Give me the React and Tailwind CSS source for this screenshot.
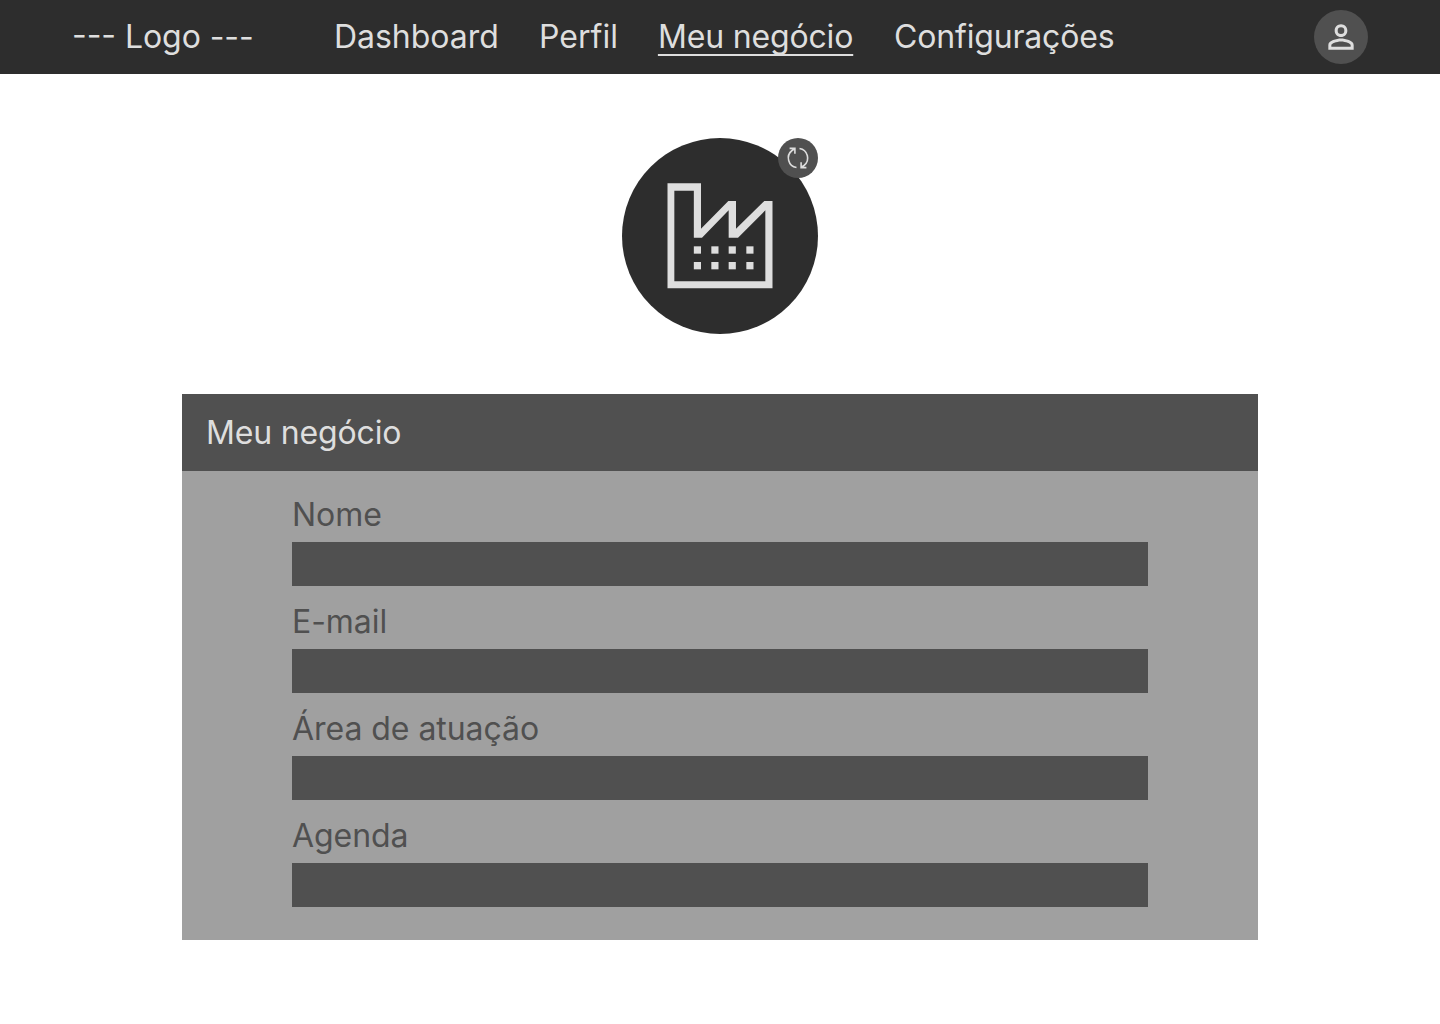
const nav = [
  { label: 'Dashboard', className: 'tracking-[-0.04px]' },
  { label: 'Perfil', className: 'ml-[0.4px]' },
  {
    label: 'Meu negócio',
    className:
      'tracking-[-0.16px] underline decoration-[2.4px] underline-offset-[6px] [text-decoration-skip-ink:none]',
  },
  { label: 'Configurações', className: 'ml-[0.8px] tracking-[-0.17px]' },
];

const fields = ['Nome', 'E-mail', 'Área de atuação', 'Agenda'];

function FactoryIcon() {
  return (
    <svg viewBox="0 0 420 390" className="-mt-[1.4px] h-[130px] w-[140px]" fill="#dedede">
      <path
        fillRule="evenodd"
        d="M52.5 40H153V176L235 93H258V176L343 93H367.5V355H52.5Z M73 62V334H346V121L264 203H236V121L156 203H131.5V62Z"
      />
      {[131.5, 184, 236, 289].map((x) => (
        <g key={x}>
          <rect x={x} y="229" width="21.5" height="22" />
          <rect x={x} y="276" width="21.5" height="22" />
        </g>
      ))}
    </svg>
  );
}

function SyncIcon() {
  return (
    <svg viewBox="0 0 24 24" className="-mt-px -ml-px size-6" fill="none" stroke="#dedede" strokeWidth="1.6">
      <path d="M10.5 21.5A9.6 9.6 0 0 1 6 4.5L8.7 2.8M3.6 2.4H8.9V7.7" />
      <path d="M13.5 2.5A9.6 9.6 0 0 1 18 19.5L15.3 21.2M20.4 21.6H15.1V16.3" />
    </svg>
  );
}

function PersonIcon() {
  return (
    <svg viewBox="0 0 24 24" className="size-[38px]" fill="#dedede">
      <path d="M12 5.9a2.1 2.1 0 1 1 0 4.2 2.1 2.1 0 0 1 0-4.2m0 9c2.97 0 6.1 1.46 6.1 2.1v1.1H5.9V17c0-.64 3.13-2.1 6.1-2.1M12 4C9.79 4 8 5.79 8 8s1.79 4 4 4 4-1.79 4-4-1.79-4-4-4m0 9c-2.67 0-8 1.34-8 4v3h16v-3c0-2.66-5.33-4-8-4" />
    </svg>
  );
}

export default function App() {
  return (
    <div className="min-h-screen bg-white font-['Inter',sans-serif] text-[32px] leading-[39px] text-[#dedede]">
      <header className="flex h-[74px] items-center bg-[#2d2d2d] px-[72px]">
        <div className="w-[262px] pb-[2px] tracking-[-0.06px] whitespace-nowrap [font-feature-settings:'calt'_1]">
          --- Logo ---
        </div>
        <nav className="flex flex-1 gap-10 pb-[2px]">
          {nav.map((item) => (
            <a key={item.label} href="#" className={item.className}>
              {item.label}
            </a>
          ))}
        </nav>
        <button className="flex size-[54px] items-center justify-center rounded-full bg-[#505050]">
          <PersonIcon />
        </button>
      </header>
      <main className="flex flex-col items-center">
        <div className="relative mt-16 flex size-[196px] items-center justify-center rounded-full bg-[#2d2d2d]">
          <FactoryIcon />
          <button className="absolute top-0 right-0 flex size-10 items-center justify-center rounded-full bg-[#505050]">
            <SyncIcon />
          </button>
        </div>
        <section className="mt-[60px] h-[546px] w-[1076px] bg-[#a0a0a0]">
          <h1 className="flex h-[77px] items-center bg-[#505050] px-6 tracking-[-0.16px]">
            Meu negócio
          </h1>
          <form className="flex flex-col gap-4 px-[110px] pt-6 tracking-[-0.05px] text-[#505050]">
            {fields.map((label) => (
              <label key={label} className="flex flex-col gap-2">
                {label}
                <input className="h-11 bg-[#505050] px-3 text-[#dedede] outline-none" />
              </label>
            ))}
          </form>
        </section>
      </main>
    </div>
  );
}
